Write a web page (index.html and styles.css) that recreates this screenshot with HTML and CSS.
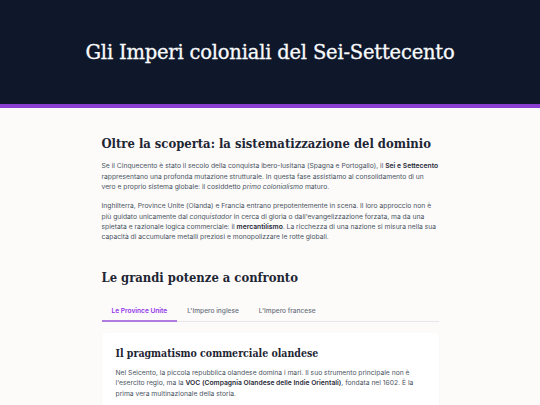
FILE: index.html
```html
<!DOCTYPE html>
<html lang="it">
<head>
<meta charset="utf-8">
<link rel="stylesheet" href="styles.css">
</head>
<body>
<header class="hero">
  <h1 class="hero-title">Gli Imperi coloniali del Sei-Settecento</h1>
</header>
<main class="content">
  <section class="intro">
    <h2 class="section-title">Oltre la scoperta: la sistematizzazione del dominio</h2>
    <p class="text">Se il Cinquecento è stato il secolo della conquista ibero-lusitana (Spagna e Portogallo), il <strong>Sei e Settecento</strong> rappresentano una profonda mutazione strutturale. In questa fase assistiamo al consolidamento di un vero e proprio sistema globale: il cosiddetto <em>primo colonialismo</em> maturo.</p>
    <p class="text">Inghilterra, Province Unite (Olanda) e Francia entrano prepotentemente in scena. Il loro approccio non è più guidato unicamente dal <em>conquistador</em> in cerca di gloria o dall'evangelizzazione forzata, ma da una spietata e razionale logica commerciale: il <strong>mercantilismo</strong>. La ricchezza di una nazione si misura nella sua capacità di accumulare metalli preziosi e monopolizzare le rotte globali.</p>
  </section>
  <section class="powers">
    <h2 class="section-title">Le grandi potenze a confronto</h2>
    <nav class="tabs">
      <span class="tab active">Le Province Unite</span>
      <span class="tab">L'Impero inglese</span>
      <span class="tab">L'Impero francese</span>
    </nav>
    <article class="card">
      <h3 class="card-title">Il pragmatismo commerciale olandese</h3>
      <p class="text card-text">Nel Seicento, la piccola repubblica olandese domina i mari. Il suo strumento principale non è l'esercito regio, ma la <strong>VOC (Compagnia Olandese delle Indie Orientali)</strong>, fondata nel 1602. È la prima vera multinazionale della storia.</p>
    </article>
  </section>
</main>
</body>
</html>
```
FILE: styles.css
```css
* { box-sizing: border-box; }
html, body { margin: 0; padding: 0; }
body {
  background: #fcfbfa;
  font-family: Inter, "Liberation Sans", sans-serif;
  color: #4b5563;
}
.hero {
  background: #0f172a;
  height: 108px;
  border-bottom: 4px solid #8b3fd0;
  display: flex;
  align-items: center;
  justify-content: center;
}
.hero-title {
  margin: 0;
  font-family: "DejaVu Serif", serif;
  font-weight: normal;
  font-size: 19.5px;
  color: #f8fafc;
  letter-spacing: -0.2px;
  -webkit-text-stroke: 0.3px #f8fafc;
}
.content {
  width: 337px;
  margin: 0 auto;
  padding-top: 28px;
}
.section-title {
  margin: 0 0 9.3px;
  font-family: "DejaVu Serif Condensed", "DejaVu Serif", serif;
  font-stretch: condensed;
  font-weight: bold;
  font-size: 12.9px;
  line-height: 16px;
  color: #1e2533;
}
.text {
  margin: 0 0 9.3px;
  font-size: 6.76px;
  line-height: 10.3px;
  color: #4b5563;
}
.text strong { color: #1f2937; font-weight: 600; }
.text em { font-style: italic; }
.powers { padding-top: 18.4px; }
.powers .section-title { margin-bottom: 14.6px; }
.tabs {
  display: flex;
  border-bottom: 1px solid #ebe6ee;
  margin-bottom: 11.7px;
}
.tab {
  padding: 6px 10px 4.7px;
  font-size: 6.6px;
  line-height: 8px;
  font-weight: 500;
  color: #6b7280;
  border-bottom: 2px solid transparent;
  margin-bottom: -1px;
}
.tab.active {
  color: #9333ea;
  font-weight: 600;
  border-bottom-color: #b37be0;
}
.card {
  background: #ffffff;
  border-radius: 4px;
  box-shadow: 0 1px 2px rgba(0,0,0,0.05);
  padding: 13.5px 14px;
}
.card-title {
  margin: 0 0 7.8px;
  font-family: "DejaVu Serif Condensed", "DejaVu Serif", serif;
  font-stretch: condensed;
  font-weight: bold;
  font-size: 10.5px;
  line-height: 13px;
  color: #1e2533;
}
.card-text {
  line-height: 10.8px;
  margin: 0;
}
```
